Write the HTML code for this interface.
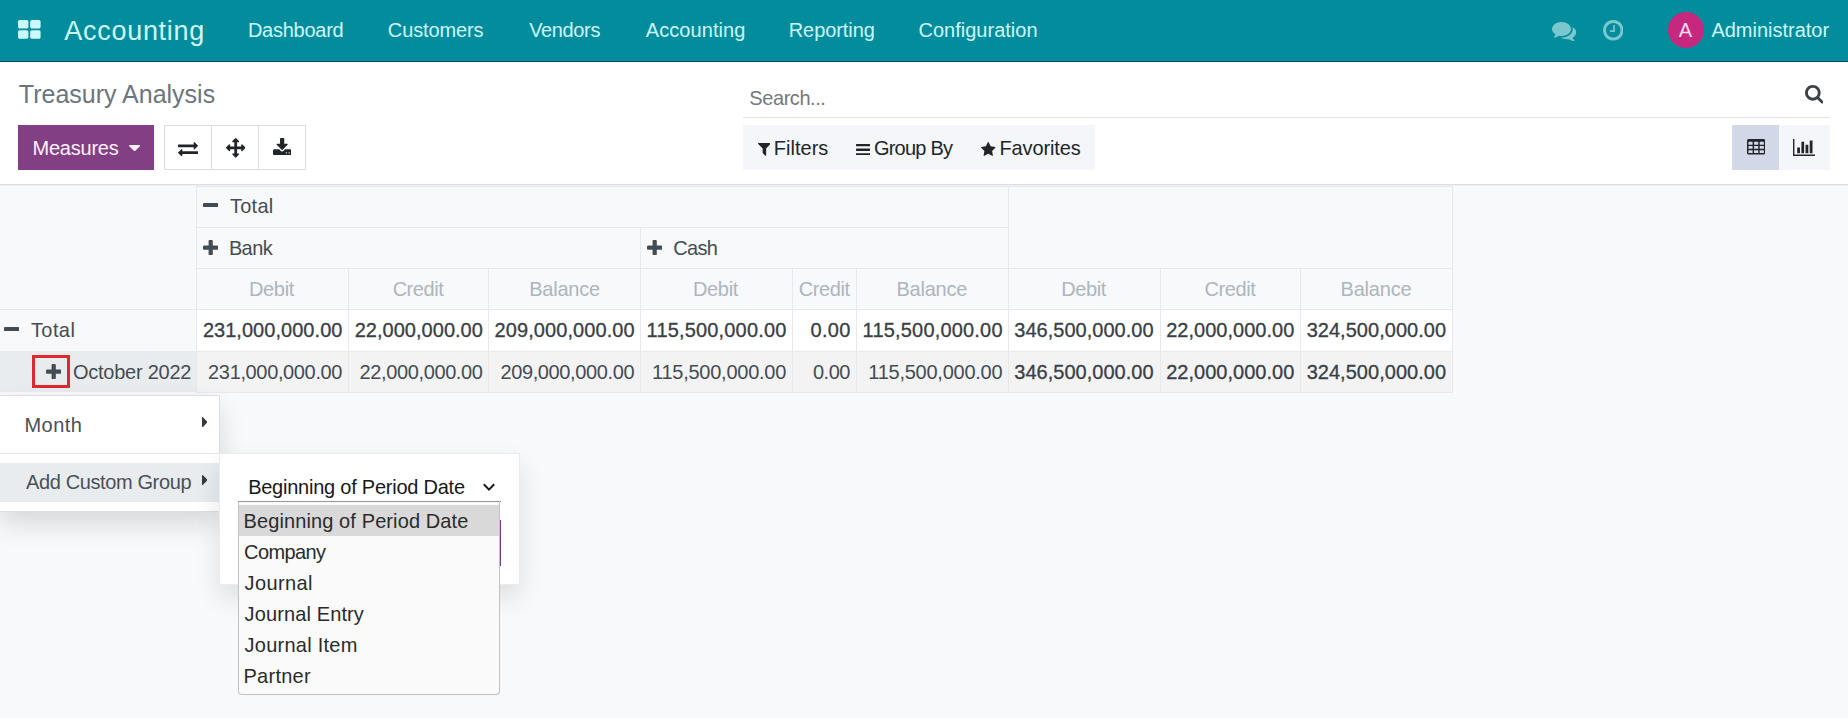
<!DOCTYPE html>
<html lang="en"><head><meta charset="utf-8"><title>Treasury Analysis</title>
<style>
html,body{margin:0;padding:0}
body{width:1848px;height:718px;overflow:hidden;position:relative;background:#f8f9fa;font-family:"Liberation Sans",sans-serif;}
.b,.t,.i{position:absolute;display:block;margin:0;padding:0}
.t{white-space:nowrap;line-height:1;font-weight:400;text-decoration:none}
.s{transform:scaleY(1.045);transform-origin:0 17px}
.nav{position:absolute;left:0;top:0;width:1848px;height:62px;background:#028c9c;box-shadow:inset 0 -1px 0 #054f63;}
.avatar{position:absolute;left:1667.5px;top:11.5px;width:36.5px;height:36.5px;border-radius:50%;background:#c6287f}
.cp,.content{position:absolute;left:0;top:0;width:1848px;height:0}
.dd1{left:-1px;top:395px;width:221px;height:116.5px;box-sizing:border-box;border:1px solid #dcdee1;background:#fff;box-shadow:0 12px 24px rgba(0,0,0,.13)}
.dd2{left:219px;top:453px;width:301px;height:132px;background:#fff;border:1px solid #e9ebed;box-sizing:border-box;box-shadow:0 12px 24px rgba(0,0,0,.11)}
.lb{left:238px;top:501px;width:261.5px;height:193.5px;box-sizing:border-box;background:#fafafa;border:1px solid #c2c2c2;border-top-color:#979797;border-radius:0 0 4px 4px}
.sel{left:0;top:3px;width:259.5px;height:31px;background:#d9d9d9}

.nav,.cp{z-index:0}
</style></head>
<body>
<header class="nav">
<svg class="i" style="left:18.2px;top:20.4px;width:22.60px;height:18.70px;" viewBox="0 -1408 1664 1408" preserveAspectRatio="none"><path fill="#cdf8fb" transform="scale(1,-1)" d="M768 512v-384q0 -52 -38 -90t-90 -38h-512q-52 0 -90 38t-38 90v384q0 52 38 90t90 38h512q52 0 90 -38t38 -90zM768 1280v-384q0 -52 -38 -90t-90 -38h-512q-52 0 -90 38t-38 90v384q0 52 38 90t90 38h512q52 0 90 -38t38 -90zM1664 512v-384q0 -52 -38 -90t-90 -38 h-512q-52 0 -90 38t-38 90v384q0 52 38 90t90 38h512q52 0 90 -38t38 -90zM1664 1280v-384q0 -52 -38 -90t-90 -38h-512q-52 0 -90 38t-38 90v384q0 52 38 90t90 38h512q52 0 90 -38t38 -90z"/></svg>
<a class="t" style="left:64.31px;top:18.00px;font-size:27px;color:#cdf8fb;letter-spacing:0.710px;">Accounting</a>
<a class="t" style="left:247.93px;top:20.00px;font-size:20px;color:#cdf8fb;letter-spacing:-0.258px;">Dashboard</a>
<a class="t" style="left:387.86px;top:20.00px;font-size:20px;color:#cdf8fb;letter-spacing:-0.135px;">Customers</a>
<a class="t" style="left:529.13px;top:20.00px;font-size:20px;color:#cdf8fb;letter-spacing:-0.354px;">Vendors</a>
<a class="t" style="left:645.79px;top:20.00px;font-size:20px;color:#cdf8fb;letter-spacing:0.070px;">Accounting</a>
<a class="t" style="left:788.75px;top:20.00px;font-size:20px;color:#cdf8fb;letter-spacing:-0.079px;">Reporting</a>
<a class="t" style="left:918.48px;top:20.00px;font-size:20px;color:#cdf8fb;letter-spacing:0.011px;">Configuration</a>
<svg class="i" style="left:1551.9px;top:21.8px;width:24.20px;height:19.10px;" viewBox="0 -1279.9999694824219 1792 1408.111083984375" preserveAspectRatio="none"><path fill="#7ac7ce" transform="scale(1,-1)" d="M1408 768q0 -139 -94 -257t-256.5 -186.5t-353.5 -68.5q-86 0 -176 16q-124 -88 -278 -128q-36 -9 -86 -16h-3q-11 0 -20.5 8t-11.5 21q-1 3 -1 6.5t0.5 6.5t2 6l2.5 5t3.5 5.5t4 5t4.5 5t4 4.5q5 6 23 25t26 29.5t22.5 29t25 38.5t20.5 44q-124 72 -195 177t-71 224 q0 139 94 257t256.5 186.5t353.5 68.5t353.5 -68.5t256.5 -186.5t94 -257zM1792 512q0 -120 -71 -224.5t-195 -176.5q10 -24 20.5 -44t25 -38.5t22.5 -29t26 -29.5t23 -25q1 -1 4 -4.5t4.5 -5t4 -5t3.5 -5.5l2.5 -5t2 -6t0.5 -6.5t-1 -6.5q-3 -14 -13 -22t-22 -7 q-50 7 -86 16q-154 40 -278 128q-90 -16 -176 -16q-271 0 -472 132q58 -4 88 -4q161 0 309 45t264 129q125 92 192 212t67 254q0 77 -23 152q129 -71 204 -178t75 -230z"/></svg>
<svg class="i" style="left:1602.8px;top:20.3px;width:20.50px;height:20.50px;" viewBox="0 -1408 1536 1536" preserveAspectRatio="none"><path fill="#7ac7ce" transform="scale(1,-1)" d="M896 992v-448q0 -14 -9 -23t-23 -9h-320q-14 0 -23 9t-9 23v64q0 14 9 23t23 9h224v352q0 14 9 23t23 9h64q14 0 23 -9t9 -23zM1312 640q0 148 -73 273t-198 198t-273 73t-273 -73t-198 -198t-73 -273t73 -273t198 -198t273 -73t273 73t198 198t73 273zM1536 640 q0 -209 -103 -385.5t-279.5 -279.5t-385.5 -103t-385.5 103t-279.5 279.5t-103 385.5t103 385.5t279.5 279.5t385.5 103t385.5 -103t279.5 -279.5t103 -385.5z"/></svg>
<div class="avatar"></div>
<span class="t" style="left:1678.79px;top:20.00px;font-size:20px;color:#fbdff0;">A</span>
<span class="t" style="left:1711.41px;top:20.00px;font-size:20px;color:#cdf8fb;letter-spacing:-0.006px;">Administrator</span>
</header>
<section class="cp">
<div class="b" style="left:0px;top:62px;width:1848px;height:122px;background:#fff;border-bottom:1px solid #dcdfe3;box-shadow:0 1px 0 #eceef1;"></div>
<h1 class="t" style="left:18.82px;top:82.00px;font-size:25px;color:#6c757d;">Treasury Analysis</h1>
<span class="t s" style="left:749.36px;top:88.00px;font-size:20px;color:#73787d;letter-spacing:-0.437px;">Search...</span>
<div class="b" style="left:743px;top:117px;width:1087px;height:1px;background:#e2e3e5;"></div>
<svg class="i" style="left:1804.6px;top:85.4px;width:18.50px;height:18.50px;" viewBox="0 -1408 1664 1664" preserveAspectRatio="none"><path fill="#3b4146" transform="scale(1,-1)" d="M1152 704q0 185 -131.5 316.5t-316.5 131.5t-316.5 -131.5t-131.5 -316.5t131.5 -316.5t316.5 -131.5t316.5 131.5t131.5 316.5zM1664 -128q0 -52 -38 -90t-90 -38q-54 0 -90 38l-343 342q-179 -124 -399 -124q-143 0 -273.5 55.5t-225 150t-150 225t-55.5 273.5 t55.5 273.5t150 225t225 150t273.5 55.5t273.5 -55.5t225 -150t150 -225t55.5 -273.5q0 -220 -124 -399l343 -343q37 -37 37 -90z"/></svg>
<div class="b btn" style="left:18px;top:125px;width:136px;height:45px;background:#833f83;"></div>
<span class="t" style="left:32.52px;top:138.00px;font-size:20px;color:#fff2ff;letter-spacing:-0.224px;">Measures</span>
<svg class="i" style="left:128.7px;top:145.2px;width:11.20px;height:6.20px;" viewBox="0 -896 1024 576" preserveAspectRatio="none"><path fill="#fff2ff" transform="scale(1,-1)" d="M1024 832q0 -26 -19 -45l-448 -448q-19 -19 -45 -19t-45 19l-448 448q-19 19 -19 45t19 45t45 19h896q26 0 45 -19t19 -45z"/></svg>
<div class="b" style="left:164px;top:125px;width:142px;height:45px;background:#fff;border:1px solid #dcdddf;box-sizing:border-box;"></div>
<div class="b" style="left:211px;top:125px;width:1px;height:45px;background:#dcdddf;"></div>
<div class="b" style="left:258px;top:125px;width:1px;height:45px;background:#dcdddf;"></div>
<svg class="i" style="left:178px;top:141.5px;width:20.00px;height:14.50px;" viewBox="0 -1248 1792 1344" preserveAspectRatio="none"><path fill="#212529" transform="scale(1,-1)" d="M1792 352v-192q0 -13 -9.5 -22.5t-22.5 -9.5h-1376v-192q0 -13 -9.5 -22.5t-22.5 -9.5q-12 0 -24 10l-319 320q-9 9 -9 22q0 14 9 23l320 320q9 9 23 9q13 0 22.5 -9.5t9.5 -22.5v-192h1376q13 0 22.5 -9.5t9.5 -22.5zM1792 896q0 -14 -9 -23l-320 -320q-9 -9 -23 -9 q-13 0 -22.5 9.5t-9.5 22.5v192h-1376q-13 0 -22.5 9.5t-9.5 22.5v192q0 13 9.5 22.5t22.5 9.5h1376v192q0 14 9 23t23 9q12 0 24 -10l319 -319q9 -9 9 -23z"/></svg>
<svg class="i" style="left:225.8px;top:138.1px;width:19.40px;height:19.60px;" viewBox="0 -1536 1792 1792" preserveAspectRatio="none"><path fill="#212529" transform="scale(1,-1)" d="M1792 640q0 -26 -19 -45l-256 -256q-19 -19 -45 -19t-45 19t-19 45v128h-384v-384h128q26 0 45 -19t19 -45t-19 -45l-256 -256q-19 -19 -45 -19t-45 19l-256 256q-19 19 -19 45t19 45t45 19h128v384h-384v-128q0 -26 -19 -45t-45 -19t-45 19l-256 256q-19 19 -19 45 t19 45l256 256q19 19 45 19t45 -19t19 -45v-128h384v384h-128q-26 0 -45 19t-19 45t19 45l256 256q19 19 45 19t45 -19l256 -256q19 -19 19 -45t-19 -45t-45 -19h-128v-384h384v128q0 26 19 45t45 19t45 -19l256 -256q19 -19 19 -45z"/></svg>
<svg class="i" style="left:273px;top:138.1px;width:18.30px;height:17.00px;" viewBox="0 -1536 1664 1536" preserveAspectRatio="none"><path fill="#212529" transform="scale(1,-1)" d="M1280 192q0 26 -19 45t-45 19t-45 -19t-19 -45t19 -45t45 -19t45 19t19 45zM1536 192q0 26 -19 45t-45 19t-45 -19t-19 -45t19 -45t45 -19t45 19t19 45zM1664 416v-320q0 -40 -28 -68t-68 -28h-1472q-40 0 -68 28t-28 68v320q0 40 28 68t68 28h465l135 -136 q58 -56 136 -56t136 56l136 136h464q40 0 68 -28t28 -68zM1339 985q17 -41 -14 -70l-448 -448q-18 -19 -45 -19t-45 19l-448 448q-31 29 -14 70q17 39 59 39h256v448q0 26 19 45t45 19h256q26 0 45 -19t19 -45v-448h256q42 0 59 -39z"/></svg>
<div class="b" style="left:743px;top:125px;width:352px;height:45px;background:#f5f6fa;"></div>
<svg class="i" style="left:757.5px;top:143.4px;width:12.80px;height:12.80px;" viewBox="-1.0208320617675781 -1280 1410.041748046875 1408" preserveAspectRatio="none"><path fill="#212529" transform="scale(1,-1)" d="M1403 1241q17 -41 -14 -70l-493 -493v-742q0 -42 -39 -59q-13 -5 -25 -5q-27 0 -45 19l-256 256q-19 19 -19 45v486l-493 493q-31 29 -14 70q17 39 59 39h1280q42 0 59 -39z"/></svg>
<span class="t s" style="left:773.75px;top:138.00px;font-size:20px;color:#212529;letter-spacing:0.026px;">Filters</span>
<svg class="i" style="left:855.9px;top:143.8px;width:14.20px;height:11.50px;" viewBox="0 -1280 1536 1280" preserveAspectRatio="none"><path fill="#212529" transform="scale(1,-1)" d="M1536 192v-128q0 -26 -19 -45t-45 -19h-1408q-26 0 -45 19t-19 45v128q0 26 19 45t45 19h1408q26 0 45 -19t19 -45zM1536 704v-128q0 -26 -19 -45t-45 -19h-1408q-26 0 -45 19t-19 45v128q0 26 19 45t45 19h1408q26 0 45 -19t19 -45zM1536 1216v-128q0 -26 -19 -45 t-45 -19h-1408q-26 0 -45 19t-19 45v128q0 26 19 45t45 19h1408q26 0 45 -19t19 -45z"/></svg>
<span class="t s" style="left:873.89px;top:138.00px;font-size:20px;color:#212529;letter-spacing:-0.762px;">Group By</span>
<svg class="i" style="left:981.2px;top:141.8px;width:14.50px;height:13.90px;" viewBox="0 -1504 1664 1587" preserveAspectRatio="none"><path fill="#212529" transform="scale(1,-1)" d="M1664 889q0 -22 -26 -48l-363 -354l86 -500q1 -7 1 -20q0 -21 -10.5 -35.5t-30.5 -14.5q-19 0 -40 12l-449 236l-449 -236q-22 -12 -40 -12q-21 0 -31.5 14.5t-10.5 35.5q0 6 2 20l86 500l-364 354q-25 27 -25 48q0 37 56 46l502 73l225 455q19 41 49 41t49 -41l225 -455 l502 -73q56 -9 56 -46z"/></svg>
<span class="t s" style="left:999.48px;top:138.00px;font-size:20px;color:#212529;letter-spacing:-0.129px;">Favorites</span>
<div class="b" style="left:1732px;top:125px;width:47px;height:45px;background:#d2d8e7;"></div>
<div class="b" style="left:1779px;top:125px;width:51px;height:45px;background:#f5f6fa;"></div>
<svg class="i" style="left:1746.5px;top:139.3px;width:18.30px;height:15.50px;" viewBox="0 -1408 1664 1408" preserveAspectRatio="none"><path fill="#212529" transform="scale(1,-1)" d="M512 160v192q0 14 -9 23t-23 9h-320q-14 0 -23 -9t-9 -23v-192q0 -14 9 -23t23 -9h320q14 0 23 9t9 23zM512 544v192q0 14 -9 23t-23 9h-320q-14 0 -23 -9t-9 -23v-192q0 -14 9 -23t23 -9h320q14 0 23 9t9 23zM1024 160v192q0 14 -9 23t-23 9h-320q-14 0 -23 -9t-9 -23 v-192q0 -14 9 -23t23 -9h320q14 0 23 9t9 23zM512 928v192q0 14 -9 23t-23 9h-320q-14 0 -23 -9t-9 -23v-192q0 -14 9 -23t23 -9h320q14 0 23 9t9 23zM1024 544v192q0 14 -9 23t-23 9h-320q-14 0 -23 -9t-9 -23v-192q0 -14 9 -23t23 -9h320q14 0 23 9t9 23zM1536 160v192 q0 14 -9 23t-23 9h-320q-14 0 -23 -9t-9 -23v-192q0 -14 9 -23t23 -9h320q14 0 23 9t9 23zM1024 928v192q0 14 -9 23t-23 9h-320q-14 0 -23 -9t-9 -23v-192q0 -14 9 -23t23 -9h320q14 0 23 9t9 23zM1536 544v192q0 14 -9 23t-23 9h-320q-14 0 -23 -9t-9 -23v-192 q0 -14 9 -23t23 -9h320q14 0 23 9t9 23zM1536 928v192q0 14 -9 23t-23 9h-320q-14 0 -23 -9t-9 -23v-192q0 -14 9 -23t23 -9h320q14 0 23 9t9 23zM1664 1248v-1088q0 -66 -47 -113t-113 -47h-1344q-66 0 -113 47t-47 113v1088q0 66 47 113t113 47h1344q66 0 113 -47t47 -113 z"/></svg>
<svg class="i" style="left:1792.6px;top:139.4px;width:22.30px;height:17.00px;" viewBox="0 -1408 2048 1536" preserveAspectRatio="none"><path fill="#212529" transform="scale(1,-1)" d="M640 640v-512h-256v512h256zM1024 1152v-1024h-256v1024h256zM2048 0v-128h-2048v1536h128v-1408h1920zM1408 896v-768h-256v768h256zM1792 1280v-1152h-256v1152h256z"/></svg>
</section>
<main class="content">
<div class="b c" style="left:196px;top:186px;width:812px;height:41px;background:#f8f9fa;box-shadow:inset 1px 1px 0 #e7e9ec;"></div>
<div class="b c" style="left:1008px;top:186px;width:444px;height:82px;background:#f8f9fa;box-shadow:inset 1px 1px 0 #e7e9ec;"></div>
<div class="b c" style="left:196px;top:227px;width:444px;height:41px;background:#f8f9fa;box-shadow:inset 1px 1px 0 #e7e9ec;"></div>
<div class="b c" style="left:640px;top:227px;width:368px;height:41px;background:#f8f9fa;box-shadow:inset 1px 1px 0 #e7e9ec;"></div>
<div class="b c" style="left:196px;top:268px;width:152px;height:41px;background:#f8f9fa;box-shadow:inset 1px 1px 0 #e7e9ec;"></div>
<div class="b c" style="left:348px;top:268px;width:140px;height:41px;background:#f8f9fa;box-shadow:inset 1px 1px 0 #e7e9ec;"></div>
<div class="b c" style="left:488px;top:268px;width:152px;height:41px;background:#f8f9fa;box-shadow:inset 1px 1px 0 #e7e9ec;"></div>
<div class="b c" style="left:640px;top:268px;width:152px;height:41px;background:#f8f9fa;box-shadow:inset 1px 1px 0 #e7e9ec;"></div>
<div class="b c" style="left:792px;top:268px;width:64px;height:41px;background:#f8f9fa;box-shadow:inset 1px 1px 0 #e7e9ec;"></div>
<div class="b c" style="left:856px;top:268px;width:152px;height:41px;background:#f8f9fa;box-shadow:inset 1px 1px 0 #e7e9ec;"></div>
<div class="b c" style="left:1008px;top:268px;width:152px;height:41px;background:#f8f9fa;box-shadow:inset 1px 1px 0 #e7e9ec;"></div>
<div class="b c" style="left:1160px;top:268px;width:140px;height:41px;background:#f8f9fa;box-shadow:inset 1px 1px 0 #e7e9ec;"></div>
<div class="b c" style="left:1300px;top:268px;width:152px;height:41px;background:#f8f9fa;box-shadow:inset 1px 1px 0 #e7e9ec;"></div>
<div class="b c" style="left:196px;top:309px;width:152px;height:42px;background:#ffffff;box-shadow:inset 1px 1px 0 #e7e9ec;"></div>
<div class="b c" style="left:348px;top:309px;width:140px;height:42px;background:#ffffff;box-shadow:inset 1px 1px 0 #e7e9ec;"></div>
<div class="b c" style="left:488px;top:309px;width:152px;height:42px;background:#ffffff;box-shadow:inset 1px 1px 0 #e7e9ec;"></div>
<div class="b c" style="left:640px;top:309px;width:152px;height:42px;background:#ffffff;box-shadow:inset 1px 1px 0 #e7e9ec;"></div>
<div class="b c" style="left:792px;top:309px;width:64px;height:42px;background:#ffffff;box-shadow:inset 1px 1px 0 #e7e9ec;"></div>
<div class="b c" style="left:856px;top:309px;width:152px;height:42px;background:#ffffff;box-shadow:inset 1px 1px 0 #e7e9ec;"></div>
<div class="b c" style="left:1008px;top:309px;width:152px;height:42px;background:#ffffff;box-shadow:inset 1px 1px 0 #e7e9ec;"></div>
<div class="b c" style="left:1160px;top:309px;width:140px;height:42px;background:#ffffff;box-shadow:inset 1px 1px 0 #e7e9ec;"></div>
<div class="b c" style="left:1300px;top:309px;width:152px;height:42px;background:#ffffff;box-shadow:inset 1px 1px 0 #e7e9ec;"></div>
<div class="b c" style="left:196px;top:351px;width:152px;height:41px;background:#f3f3f4;box-shadow:inset 1px 1px 0 #e7e9ec;"></div>
<div class="b c" style="left:348px;top:351px;width:140px;height:41px;background:#f3f3f4;box-shadow:inset 1px 1px 0 #e7e9ec;"></div>
<div class="b c" style="left:488px;top:351px;width:152px;height:41px;background:#f3f3f4;box-shadow:inset 1px 1px 0 #e7e9ec;"></div>
<div class="b c" style="left:640px;top:351px;width:152px;height:41px;background:#f3f3f4;box-shadow:inset 1px 1px 0 #e7e9ec;"></div>
<div class="b c" style="left:792px;top:351px;width:64px;height:41px;background:#f3f3f4;box-shadow:inset 1px 1px 0 #e7e9ec;"></div>
<div class="b c" style="left:856px;top:351px;width:152px;height:41px;background:#f3f3f4;box-shadow:inset 1px 1px 0 #e7e9ec;"></div>
<div class="b c" style="left:1008px;top:351px;width:152px;height:41px;background:#f3f3f4;box-shadow:inset 1px 1px 0 #e7e9ec;"></div>
<div class="b c" style="left:1160px;top:351px;width:140px;height:41px;background:#f3f3f4;box-shadow:inset 1px 1px 0 #e7e9ec;"></div>
<div class="b c" style="left:1300px;top:351px;width:152px;height:41px;background:#f3f3f4;box-shadow:inset 1px 1px 0 #e7e9ec;"></div>
<div class="b" style="left:0px;top:351px;width:196px;height:41px;background:#e9ecef;"></div>
<div class="b" style="left:1452px;top:186px;width:1px;height:206px;background:#e7e9ec;"></div>
<div class="b" style="left:196px;top:392px;width:1257px;height:1px;background:#e7e9ec;"></div>
<div class="b" style="left:0px;top:309px;width:196px;height:1px;background:#e7e9ec;"></div>
<svg class="i" style="left:202.9px;top:202.8px;width:15.40px;height:4.40px;" viewBox="0 -896 1408 384" preserveAspectRatio="none"><path fill="#444c53" transform="scale(1,-1)" d="M1408 800v-192q0 -40 -28 -68t-68 -28h-1216q-40 0 -68 28t-28 68v192q0 40 28 68t68 28h1216q40 0 68 -28t28 -68z"/></svg>
<span class="t s" style="left:229.96px;top:196.00px;font-size:20px;color:#444c53;letter-spacing:0.248px;">Total</span>
<svg class="i" style="left:202.9px;top:239.7px;width:15.40px;height:15.40px;" viewBox="0 -1408 1408 1408" preserveAspectRatio="none"><path fill="#444c53" transform="scale(1,-1)" d="M1408 800v-192q0 -40 -28 -68t-68 -28h-416v-416q0 -40 -28 -68t-68 -28h-192q-40 0 -68 28t-28 68v416h-416q-40 0 -68 28t-28 68v192q0 40 28 68t68 28h416v416q0 40 28 68t68 28h192q40 0 68 -28t28 -68v-416h416q40 0 68 -28t28 -68z"/></svg>
<span class="t s" style="left:228.88px;top:238.00px;font-size:20px;color:#444c53;letter-spacing:-0.597px;">Bank</span>
<svg class="i" style="left:646.9px;top:239.7px;width:15.40px;height:15.40px;" viewBox="0 -1408 1408 1408" preserveAspectRatio="none"><path fill="#444c53" transform="scale(1,-1)" d="M1408 800v-192q0 -40 -28 -68t-68 -28h-416v-416q0 -40 -28 -68t-68 -28h-192q-40 0 -68 28t-28 68v416h-416q-40 0 -68 28t-28 68v192q0 40 28 68t68 28h416v416q0 40 28 68t68 28h192q40 0 68 -28t28 -68v-416h416q40 0 68 -28t28 -68z"/></svg>
<span class="t s" style="left:673.33px;top:238.00px;font-size:20px;color:#444c53;letter-spacing:-0.697px;">Cash</span>
<span class="t s" style="left:248.88px;top:279.00px;font-size:20px;color:#adb5bd;letter-spacing:-0.286px;">Debit</span>
<span class="t s" style="left:392.64px;top:279.00px;font-size:20px;color:#adb5bd;letter-spacing:-0.454px;">Credit</span>
<span class="t s" style="left:529.26px;top:279.00px;font-size:20px;color:#adb5bd;letter-spacing:-0.240px;">Balance</span>
<span class="t s" style="left:692.88px;top:279.00px;font-size:20px;color:#adb5bd;letter-spacing:-0.286px;">Debit</span>
<span class="t s" style="left:798.64px;top:279.00px;font-size:20px;color:#adb5bd;letter-spacing:-0.390px;">Credit</span>
<span class="t s" style="left:896.46px;top:279.00px;font-size:20px;color:#adb5bd;letter-spacing:-0.217px;">Balance</span>
<span class="t s" style="left:1061.13px;top:279.00px;font-size:20px;color:#adb5bd;letter-spacing:-0.365px;">Debit</span>
<span class="t s" style="left:1204.39px;top:279.00px;font-size:20px;color:#adb5bd;letter-spacing:-0.371px;">Credit</span>
<span class="t s" style="left:1340.48px;top:279.00px;font-size:20px;color:#adb5bd;letter-spacing:-0.167px;">Balance</span>
<svg class="i" style="left:3.9px;top:326.7px;width:15.50px;height:4.40px;" viewBox="0 -896 1408 384" preserveAspectRatio="none"><path fill="#444c53" transform="scale(1,-1)" d="M1408 800v-192q0 -40 -28 -68t-68 -28h-1216q-40 0 -68 28t-28 68v192q0 40 28 68t68 28h1216q40 0 68 -28t28 -68z"/></svg>
<span class="t s" style="left:30.96px;top:320.00px;font-size:20px;color:#444c53;letter-spacing:0.409px;">Total</span>
<div class="b" style="left:32px;top:355px;width:38px;height:33px;border:3px solid #e0292c;box-sizing:border-box;"></div>
<svg class="i" style="left:45.9px;top:363.6px;width:15.40px;height:15.40px;" viewBox="0 -1408 1408 1408" preserveAspectRatio="none"><path fill="#444c53" transform="scale(1,-1)" d="M1408 800v-192q0 -40 -28 -68t-68 -28h-416v-416q0 -40 -28 -68t-68 -28h-192q-40 0 -68 28t-28 68v416h-416q-40 0 -68 28t-28 68v192q0 40 28 68t68 28h416v416q0 40 28 68t68 28h192q40 0 68 -28t28 -68v-416h416q40 0 68 -28t28 -68z"/></svg>
<span class="t s" style="left:72.92px;top:362.00px;font-size:20px;color:#444c53;letter-spacing:-0.243px;">October 2022</span>
<span class="t n s" style="left:202.89px;top:320.00px;font-size:20px;color:#394046;letter-spacing:0.040px;-webkit-text-stroke:0.3px currentColor;">231,000,000.00</span>
<span class="t n s" style="left:208.11px;top:362.00px;font-size:20px;color:#444c53;letter-spacing:-0.359px;">231,000,000.00</span>
<span class="t n s" style="left:354.71px;top:320.00px;font-size:20px;color:#394046;letter-spacing:0.024px;-webkit-text-stroke:0.3px currentColor;">22,000,000.00</span>
<span class="t n s" style="left:359.62px;top:362.00px;font-size:20px;color:#444c53;letter-spacing:-0.384px;">22,000,000.00</span>
<span class="t n s" style="left:494.60px;top:320.00px;font-size:20px;color:#394046;letter-spacing:0.074px;-webkit-text-stroke:0.3px currentColor;">209,000,000.00</span>
<span class="t n s" style="left:500.42px;top:362.00px;font-size:20px;color:#444c53;letter-spacing:-0.370px;">209,000,000.00</span>
<span class="t n s" style="left:646.59px;top:320.00px;font-size:20px;color:#394046;letter-spacing:0.171px;-webkit-text-stroke:0.3px currentColor;">115,500,000.00</span>
<span class="t n s" style="left:652.04px;top:362.00px;font-size:20px;color:#444c53;letter-spacing:-0.248px;">115,500,000.00</span>
<span class="t n s" style="left:810.43px;top:320.00px;font-size:20px;color:#394046;letter-spacing:0.345px;-webkit-text-stroke:0.3px currentColor;">0.00</span>
<span class="t n s" style="left:812.88px;top:362.00px;font-size:20px;color:#444c53;letter-spacing:-0.435px;">0.00</span>
<span class="t n s" style="left:862.61px;top:320.00px;font-size:20px;color:#394046;letter-spacing:0.183px;-webkit-text-stroke:0.3px currentColor;">115,500,000.00</span>
<span class="t n s" style="left:868.32px;top:362.00px;font-size:20px;color:#444c53;letter-spacing:-0.253px;">115,500,000.00</span>
<span class="t n s" style="left:1014.24px;top:320.00px;font-size:20px;color:#394046;letter-spacing:0.026px;-webkit-text-stroke:0.3px currentColor;">346,500,000.00</span>
<span class="t n s" style="left:1014.24px;top:362.00px;font-size:20px;color:#394046;letter-spacing:0.026px;-webkit-text-stroke:0.3px currentColor;">346,500,000.00</span>
<span class="t n s" style="left:1166.23px;top:320.00px;font-size:20px;color:#394046;letter-spacing:0.013px;-webkit-text-stroke:0.3px currentColor;">22,000,000.00</span>
<span class="t n s" style="left:1166.23px;top:362.00px;font-size:20px;color:#394046;letter-spacing:0.013px;-webkit-text-stroke:0.3px currentColor;">22,000,000.00</span>
<span class="t n s" style="left:1306.67px;top:320.00px;font-size:20px;color:#394046;letter-spacing:0.028px;-webkit-text-stroke:0.3px currentColor;">324,500,000.00</span>
<span class="t n s" style="left:1306.67px;top:362.00px;font-size:20px;color:#394046;letter-spacing:0.028px;-webkit-text-stroke:0.3px currentColor;">324,500,000.00</span>
</main>
<div class="b dd1"></div>
<div class="b" style="left:0px;top:453px;width:219px;height:1px;background:#e6e8eb;"></div>
<div class="b" style="left:0px;top:463px;width:219px;height:38.60000000000002px;background:#e9ecef;"></div>
<span class="t s" style="left:24.48px;top:415.00px;font-size:20px;color:#495057;letter-spacing:0.473px;">Month</span>
<svg class="i" style="left:201.8px;top:417px;width:5.40px;height:10.10px;" viewBox="0 -1152 576 1024" preserveAspectRatio="none"><path fill="#343a40" transform="scale(1,-1)" d="M576 640q0 -26 -19 -45l-448 -448q-19 -19 -45 -19t-45 19t-19 45v896q0 26 19 45t45 19t45 -19l448 -448q19 -19 19 -45z"/></svg>
<span class="t s" style="left:26.02px;top:472.00px;font-size:20px;color:#495057;letter-spacing:-0.380px;">Add Custom Group</span>
<svg class="i" style="left:201.8px;top:475.3px;width:5.40px;height:10.00px;" viewBox="0 -1152 576 1024" preserveAspectRatio="none"><path fill="#343a40" transform="scale(1,-1)" d="M576 640q0 -26 -19 -45l-448 -448q-19 -19 -45 -19t-45 19t-19 45v896q0 26 19 45t45 19t45 -19l448 -448q19 -19 19 -45z"/></svg>
<div class="b dd2"></div>
<span class="t s" style="left:248.13px;top:477.00px;font-size:20px;color:#16191c;letter-spacing:-0.239px;">Beginning of Period Date</span>
<svg class="i" style="left:482px;top:482px;width:14px;height:11px" viewBox="0 0 14 11"><path d="M1.8 2.2 L7 7.6 L12.2 2.2" fill="none" stroke="#16191c" stroke-width="2"/></svg>
<div class="b" style="left:239px;top:501px;width:262px;height:1px;background:#2aa0ad;"></div>
<div class="b" style="left:497px;top:520px;width:3.8000000000000114px;height:46px;background:#6f3d78;"></div>
<div class="b lb"><div class="b sel"></div></div>
<span class="t o s" style="left:243.52px;top:511.00px;font-size:20px;color:#2b2b2b;letter-spacing:0.108px;">Beginning of Period Date</span>
<span class="t o s" style="left:244.04px;top:542.00px;font-size:20px;color:#2b2b2b;letter-spacing:-0.597px;">Company</span>
<span class="t o s" style="left:244.54px;top:573.00px;font-size:20px;color:#2b2b2b;letter-spacing:0.401px;">Journal</span>
<span class="t o s" style="left:244.54px;top:604.00px;font-size:20px;color:#2b2b2b;letter-spacing:0.123px;">Journal Entry</span>
<span class="t o s" style="left:244.54px;top:635.00px;font-size:20px;color:#2b2b2b;letter-spacing:0.255px;">Journal Item</span>
<span class="t o s" style="left:243.52px;top:666.00px;font-size:20px;color:#2b2b2b;letter-spacing:0.255px;">Partner</span>
</body></html>
